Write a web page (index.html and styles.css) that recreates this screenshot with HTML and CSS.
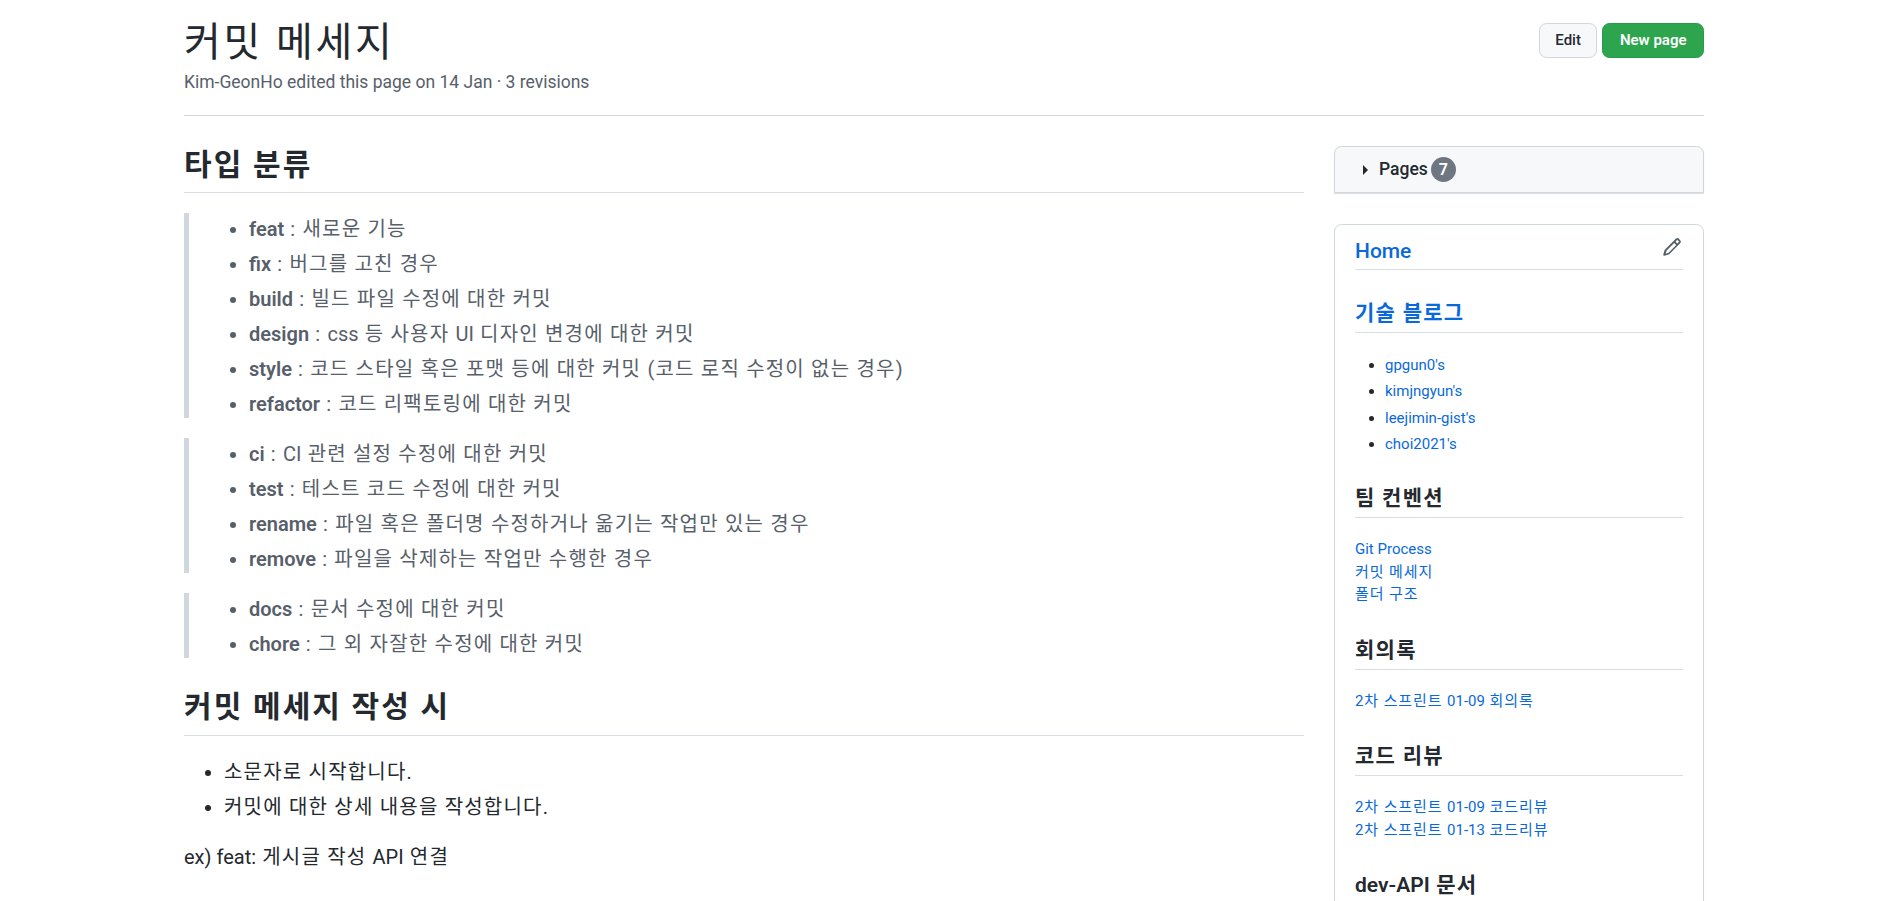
FILE: index.html
```html
<!DOCTYPE html>
<html lang="ko">
<head>
    <meta charset="UTF-8">
    <meta name="viewport" content="width=device-width, initial-scale=1.0">
    <title>커밋 메세지</title>
    <link rel="stylesheet" href="styles.css">
</head>
<body>
    <div class="container">
        <div class="page-head">
            <div>
                <h1 class="page-title">커밋 메세지</h1>
                <div class="page-meta">Kim-GeonHo edited this page on 14 Jan · 3 revisions</div>
            </div>
            <div class="page-actions">
                <a class="btn" href="#">Edit</a>
                <a class="btn btn-primary" href="#">New page</a>
            </div>
        </div>

        <div class="layout">
            <div class="content">
                <h2 class="heading first">타입 분류</h2>
                <blockquote>
                    <ul>
                        <li><strong>feat</strong> : 새로운 기능</li>
                        <li><strong>fix</strong> : 버그를 고친 경우</li>
                        <li><strong>build</strong> : 빌드 파일 수정에 대한 커밋</li>
                        <li><strong>design</strong> : <span class="en">css</span> 등 사용자 <span class="en">UI</span> 디자인 변경에 대한 커밋</li>
                        <li><strong>style</strong> : 코드 스타일 혹은 포맷 등에 대한 커밋 (코드 로직 수정이 없는 경우)</li>
                        <li><strong>refactor</strong> : 코드 리팩토링에 대한 커밋</li>
                    </ul>
                </blockquote>
                <blockquote>
                    <ul>
                        <li><strong>ci</strong> : <span class="en">CI</span> 관련 설정 수정에 대한 커밋</li>
                        <li><strong>test</strong> : 테스트 코드 수정에 대한 커밋</li>
                        <li><strong>rename</strong> : 파일 혹은 폴더명 수정하거나 옮기는 작업만 있는 경우</li>
                        <li><strong>remove</strong> : 파일을 삭제하는 작업만 수행한 경우</li>
                    </ul>
                </blockquote>
                <blockquote>
                    <ul>
                        <li><strong>docs</strong> : 문서 수정에 대한 커밋</li>
                        <li><strong>chore</strong> : 그 외 자잘한 수정에 대한 커밋</li>
                    </ul>
                </blockquote>

                <h2 class="heading">커밋 메세지 작성 시</h2>
                <ul>
                    <li>소문자로 시작합니다.</li>
                    <li>커밋에 대한 상세 내용을 작성합니다.</li>
                </ul>
                <p><span class="en">ex) feat:</span> 게시글 작성 <span class="en">API</span> 연결</p>
            </div>

            <div class="sidebar">
                <div class="pages-box">
                    <span class="caret"></span>
                    <span class="pages-label">Pages</span>
                    <span class="counter">7</span>
                </div>

                <div class="side-box">
                    <a class="side-edit" href="#">
                        <svg viewBox="0 0 16 16" width="20" height="20" fill="currentColor"><path d="M11.013 1.427a1.75 1.75 0 0 1 2.474 0l1.086 1.086a1.75 1.75 0 0 1 0 2.474l-8.61 8.61c-.21.21-.47.364-.756.445l-3.251.93a.75.75 0 0 1-.927-.928l.929-3.25c.081-.286.235-.547.445-.758l8.61-8.61Zm.176 4.823L9.75 4.81l-6 6a.75.75 0 0 0-.19.324l-.62 2.17 2.17-.62a.75.75 0 0 0 .325-.19l6-6Zm1.238-3.763a.25.25 0 0 0-.354 0L10.811 3.75l1.439 1.44 1.263-1.263a.25.25 0 0 0 0-.354Z"/></svg>
                    </a>
                    <h3 class="side-title home"><a class="en" href="#">Home</a></h3>

                    <h3 class="side-title"><a href="#">기술 블로그</a></h3>
                    <ul class="side-list">
                        <li><a href="#">gpgun0's</a></li>
                        <li><a href="#">kimjngyun's</a></li>
                        <li><a href="#">leejimin-gist's</a></li>
                        <li><a href="#">choi2021's</a></li>
                    </ul>

                    <h3 class="side-title">팀 컨벤션</h3>
                    <p class="side-links">
                        <a class="en" href="#">Git Process</a><br>
                        <a href="#">커밋 메세지</a><br>
                        <a href="#">폴더 구조</a>
                    </p>

                    <h3 class="side-title">회의록</h3>
                    <p class="side-links">
                        <a href="#">2차 스프린트 <span class="en">01-09</span> 회의록</a>
                    </p>

                    <h3 class="side-title">코드 리뷰</h3>
                    <p class="side-links">
                        <a href="#">2차 스프린트 <span class="en">01-09</span> 코드리뷰</a><br>
                        <a href="#">2차 스프린트 <span class="en">01-13</span> 코드리뷰</a>
                    </p>

                    <h3 class="side-title"><span class="en">dev-API</span> 문서</h3>
                </div>
            </div>
        </div>
    </div>
</body>
</html>
```

FILE: styles.css
```css
html, body {
    height: 100%;
    overflow: hidden;
}
body {
    margin: 0;
    background-color: #ffffff;
    color: #24292f;
    font-family: 'Roboto', 'Noto Sans CJK KR', sans-serif;
    font-size: 20px;
    line-height: 1.5;
}
a {
    color: #0969da;
    text-decoration: none;
}
.container {
    width: 1520px;
    margin-left: 184px;
}

/* hangul runs wider in the original font, latin runs don't */
li, p, .side-title {
    letter-spacing: 0.06em;
}
.page-title, .heading {
    letter-spacing: 0.07em;
}
.en, strong, .side-list li {
    letter-spacing: 0;
}

.page-head {
    display: flex;
    justify-content: space-between;
    height: 115px;
    border-bottom: 1px solid #d0d7de;
    margin-bottom: 30px;
}
.page-title {
    margin: 18px 0 0;
    font-size: 40px;
    font-weight: 400;
    line-height: 50px;
}
.page-meta {
    margin-top: 1px;
    color: #57606a;
    font-size: 17.5px;
    line-height: 26px;
}
.page-actions {
    display: flex;
    gap: 5px;
    margin-top: 23px;
}
.btn {
    box-sizing: border-box;
    display: block;
    height: 35px;
    padding: 0 15.5px;
    border: 1px solid #d0d7de;
    border-radius: 7.5px;
    background-color: #f6f8fa;
    color: #24292f;
    font-size: 15px;
    font-weight: 500;
    line-height: 33px;
}
.btn-primary {
    padding: 0 16.5px;
    background-color: #2da44e;
    border-color: #2a9a49;
    color: #ffffff;
    font-weight: 600;
}

.layout {
    display: flex;
    gap: 30px;
}
.content {
    width: 1120px;
}
.heading {
    margin: 30px 0 20px;
    padding-bottom: 9px;
    border-bottom: 1px solid #d8dee4;
    font-size: 30px;
    font-weight: 600;
    line-height: 38px;
}
.heading.first {
    margin-top: 0;
    padding-bottom: 8px;
}
blockquote {
    margin: 0 0 20px;
    padding: 0 20px;
    border-left: 5px solid #d0d7de;
    color: #57606a;
}
ul {
    margin: 0 0 20px;
    padding-left: 40px;
}
blockquote ul {
    margin-bottom: 0;
}
li {
    padding-top: 2px;
    line-height: 28px;
}
li + li {
    margin-top: 5px;
}
strong {
    font-weight: 600;
}
p {
    margin: 0 0 20px;
    padding-top: 2px;
    line-height: 28px;
}

.sidebar {
    width: 370px;
}
.pages-box {
    box-sizing: border-box;
    display: flex;
    align-items: center;
    height: 47px;
    padding-left: 28px;
    margin-bottom: 31px;
    border: 1px solid #d0d7de;
    border-radius: 7.5px 7.5px 0 0;
    background-color: #f6f8fa;
    box-shadow: 0 1px 1px rgba(31, 35, 40, 0.15);
}
.caret {
    width: 0;
    height: 0;
    margin-right: 11px;
    border-left: 5px solid #24292f;
    border-top: 5px solid transparent;
    border-bottom: 5px solid transparent;
}
.pages-label {
    font-size: 17.5px;
    font-weight: 500;
}
.counter {
    width: 25px;
    height: 25px;
    margin-left: 3px;
    border-radius: 50%;
    background-color: #6e7781;
    color: #ffffff;
    font-size: 16px;
    font-weight: 600;
    line-height: 25px;
    text-align: center;
}
.side-box {
    position: relative;
    box-sizing: border-box;
    height: 760px;
    padding: 13px 20px 0;
    border: 1px solid #d0d7de;
    border-radius: 7.5px 7.5px 0 0;
    font-size: 15px;
    line-height: 22.5px;
}
.side-edit {
    position: absolute;
    top: 12px;
    right: 21px;
    color: #57606a;
}
.side-title {
    margin: 30px 0 20px;
    padding-bottom: 6px;
    border-bottom: 1px solid #d8dee4;
    font-size: 21px;
    font-weight: 600;
    line-height: 26px;
}
.side-title.home {
    margin-top: 0;
    padding-bottom: 5px;
    font-weight: 500;
}
.side-list {
    margin-bottom: 20px;
    padding-top: 1px;
    padding-left: 30px;
}
.side-list li {
    padding-top: 0;
    line-height: 22.5px;
}
.side-list li + li {
    margin-top: 3.75px;
}
.side-links {
    margin-bottom: 20px;
    padding-top: 0;
    padding-bottom: 1px;
    line-height: 22.5px;
}
```
